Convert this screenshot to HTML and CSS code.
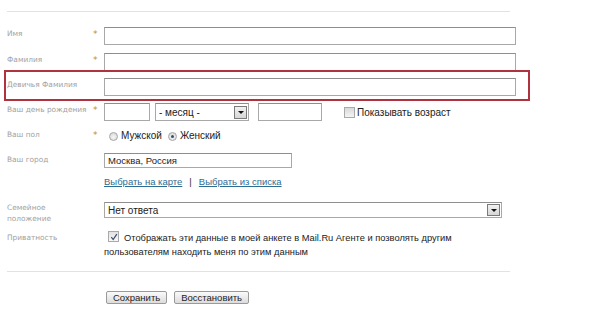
FILE: index.html
```html
<!DOCTYPE html>
<html lang="ru">
<head>
<meta charset="utf-8">
<title>Анкета</title>
<link rel="stylesheet" href="styles.css">
</head>
<body>
<div class="page">
  <div class="form">
    <div class="rule rule-top"></div>

    <div class="row r-name">
      <div class="label">Имя</div><div class="star">*</div>
      <div class="field"><span class="input wide"></span></div>
    </div>
    <div class="row">
      <div class="label">Фамилия</div><div class="star">*</div>
      <div class="field"><span class="input wide"></span></div>
    </div>
    <div class="row">
      <div class="label">Девичья Фамилия</div><div class="star"></div>
      <div class="field"><span class="input wide"></span></div>
    </div>
    <div class="row">
      <div class="label">Ваш день рождения</div><div class="star">*</div>
      <div class="field bday">
        <span class="input day"></span>
        <span class="select month"><span class="sel-text">- месяц -</span><span class="arrow"></span></span>
        <span class="input year"></span>
        <span class="check-wrap"><span class="checkbox"></span><span class="text">Показывать возраст</span></span>
      </div>
    </div>
    <div class="row r-gender">
      <div class="label">Ваш пол</div><div class="star">*</div>
      <div class="field gender">
        <span class="radio"></span><span class="text">Мужской</span>
        <span class="radio on"></span><span class="text">Женский</span>
      </div>
    </div>
    <div class="row r-city">
      <div class="label">Ваш город</div><div class="star"></div>
      <div class="field"><span class="input city"><span class="val">Москва, Россия</span></span></div>
    </div>
    <div class="row r-links">
      <div class="label"></div><div class="star"></div>
      <div class="field links"><a href="#">Выбрать на карте</a><span class="sep">|</span><a href="#">Выбрать из списка</a></div>
    </div>
    <div class="row r-family">
      <div class="label two">Семейное<br>положение</div><div class="star"></div>
      <div class="field"><span class="select family"><span class="sel-text">Нет ответа</span><span class="arrow"></span></span></div>
    </div>
    <div class="row r-privacy">
      <div class="label">Приватность</div><div class="star"></div>
      <div class="field privacy"><span class="checkbox checked"><svg viewBox="0 0 10 10" width="10" height="10"><path d="M2.3 5.2 L4.2 7.6 L7.8 2.2" fill="none" stroke="#3a4a6a" stroke-width="1.2"/></svg></span>Отображать эти данные в моей анкете в Mail.Ru Агенте и позволять другим пользователям находить меня по этим данным</div>
    </div>

    <div class="rule rule-bottom"></div>

    <div class="buttons">
      <button class="btn" type="button">Сохранить</button>
      <button class="btn" type="button">Восстановить</button>
    </div>

    <div class="highlight"></div>
  </div>
</div>
</body>
</html>
```

FILE: styles.css
```css
html, body {
  margin: 0;
  padding: 0;
  background: #ffffff;
}

.page {
  width: 600px;
  height: 322px;
  overflow: hidden;
}

.form {
  position: relative;
  padding: 11px 0 0 7px;
  width: 509px;
  font-family: "DejaVu Sans", sans-serif;
}

.rule {
  height: 0;
  border-top: 1px solid #e2e2e2;
  width: 503px;
}

.rule-top { margin-bottom: 15px; }

.rule-bottom { margin-top: 12px; }

.row {
  display: grid;
  grid-template-columns: 86px 11px 1fr;
  margin-bottom: 7px;
  align-items: start;
}

.r-name { margin-bottom: 8px; }

.label {
  font-size: 7.4px;
  line-height: 10px;
  color: #a2a2a2;
  padding-top: 2px;
  white-space: nowrap;
}

.label.two { line-height: 11px; padding-top: 0; }

.star {
  font-size: 9px;
  line-height: 10px;
  color: #bf8a45;
  padding-top: 2px;
}

.field {
  font-family: "Liberation Sans", Arial, sans-serif;
  font-size: 10px;
  color: #222;
}

.input {
  display: block;
  box-sizing: border-box;
  height: 18px;
  border: 1px solid #a8a8a8;
  border-top-color: #8e8e8e;
  background: #fff;
}

.input.wide { width: 412px; }

.bday {
  display: flex;
  align-items: center;
}

.input.day { width: 46px; }
.input.year { width: 64px; margin-left: 9px; }

.select {
  display: flex;
  align-items: center;
  box-sizing: border-box;
  border: 1px solid #a8a8a8;
  border-top-color: #8e8e8e;
  background: #fff;
  padding-left: 3px;
}

.select.month {
  width: 94px;
  height: 18px;
  margin-left: 5px;
  font-size: 10px;
}

.sel-text { flex: 1; white-space: nowrap; }

.arrow {
  position: relative;
  box-sizing: border-box;
  width: 13px;
  height: 13px;
  margin-right: 1px;
  border: 1px solid #7a7a7a;
  background: linear-gradient(#f2f2f2, #d6d6d6);
}

.arrow::after {
  content: "";
  position: absolute;
  left: 3px;
  top: 4px;
  border-left: 3px solid transparent;
  border-right: 3px solid transparent;
  border-top: 3px solid #111;
}

.check-wrap {
  display: flex;
  align-items: center;
  margin-left: 22px;
}

.checkbox {
  display: inline-block;
  box-sizing: border-box;
  width: 11px;
  height: 11px;
  border: 1px solid #a9a9a9;
  background: linear-gradient(#d9d9d9, #f4f4f4);
  margin-right: 2px;
}

.r-gender { margin-top: 5px; margin-bottom: 11px; }

.gender {
  display: flex;
  align-items: center;
  height: 14px;
  padding-left: 5px;
}

.radio {
  position: relative;
  display: inline-block;
  box-sizing: border-box;
  width: 9px;
  height: 9px;
  border-radius: 50%;
  border: 1px solid #a6a6a6;
  background: radial-gradient(circle at 50% 60%, #f6f6f6, #d2d2d2);
  margin-right: 3px;
  margin-top: 3px;
}

.radio.on::after {
  content: "";
  position: absolute;
  left: 2px;
  top: 2px;
  width: 3px;
  height: 3px;
  border-radius: 50%;
  background: #2f4f78;
}

.gender .text { margin-right: 6px; }

.input.city {
  width: 188px;
  height: 15px;
  padding-left: 3px;
  line-height: 13px;
  font-size: 9.5px;
}

.r-city { margin-bottom: 8px; }

.links {
  font-size: 9.5px;
  line-height: 12px;
}

.links a {
  color: #2e6d93;
  text-decoration: underline;
}

.links .sep {
  color: #333;
  margin: 0 7px 0 7px;
}

.r-links { margin-bottom: 14px; }

.select.family {
  width: 398px;
  height: 16px;
  font-size: 10px;
}

.select.family .arrow { height: 12px; }

.r-family { margin-bottom: 6px; }

.r-privacy .label { padding-top: 3px; }

.privacy {
  font-size: 9.3px;
  line-height: 14px;
}

.privacy .checkbox {
  position: relative;
  top: 1px;
  margin: 0 5px 0 4px;
  background: linear-gradient(#e2e2e2, #f8f8f8);
}

.privacy .checkbox svg {
  position: absolute;
  left: 0;
  top: 0;
}

.buttons {
  display: flex;
  gap: 7px;
  margin: 19px 0 0 99px;
}

.btn {
  font-family: "Liberation Sans", Arial, sans-serif;
  font-size: 9.5px;
  line-height: 10px;
  height: 13px;
  padding: 0 6px;
  color: #222;
  border: 1px solid #9a9a9a;
  border-radius: 2px;
  background: linear-gradient(#fafafa, #dcdcdc);
}

.highlight {
  position: absolute;
  left: 4px;
  top: 70px;
  width: 526px;
  height: 31px;
  box-sizing: border-box;
  border: 2px solid #b0323e;
  pointer-events: none;
}
```
